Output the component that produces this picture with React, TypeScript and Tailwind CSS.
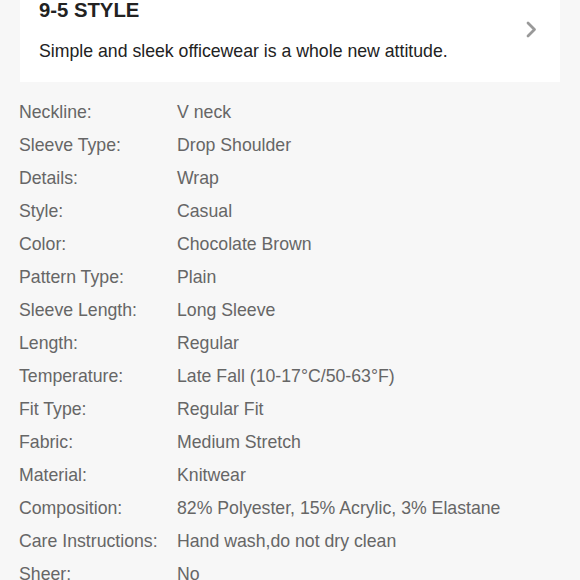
import React from "react";

const rows: [string, string][] = [
  ["Neckline:", "V neck"],
  ["Sleeve Type:", "Drop Shoulder"],
  ["Details:", "Wrap"],
  ["Style:", "Casual"],
  ["Color:", "Chocolate Brown"],
  ["Pattern Type:", "Plain"],
  ["Sleeve Length:", "Long Sleeve"],
  ["Length:", "Regular"],
  ["Temperature:", "Late Fall (10-17°C/50-63°F)"],
  ["Fit Type:", "Regular Fit"],
  ["Fabric:", "Medium Stretch"],
  ["Material:", "Knitwear"],
  ["Composition:", "82% Polyester, 15% Acrylic, 3% Elastane"],
  ["Care Instructions:", "Hand wash,do not dry clean"],
  ["Sheer:", "No"],
];

export default function App() {
  return (
    <div
      className="w-[580px] h-[580px] overflow-hidden bg-[#f7f7f7]"
      style={{ fontFamily: '"Liberation Sans", Arial, sans-serif' }}
    >
      <div className="ml-[20px] w-[540px] h-[82px] bg-white flex justify-between">
        <div className="pl-[19px]">
          <div className="text-[20.3px] leading-[20px] font-bold text-[#222]">9-5 STYLE</div>
          <div className="mt-[19px] text-[17.7px] leading-[24px] text-[#222]">
            Simple and sleek officewear is a whole new attitude.
          </div>
        </div>
        <svg
          className="mt-[21px] mr-[23px]"
          width="12"
          height="17"
          viewBox="0 0 12 17"
          fill="none"
        >
          <path d="M3 2 L9.5 8.5 L3 15" stroke="#999999" strokeWidth="2.8" strokeLinecap="round" strokeLinejoin="round" />
        </svg>
      </div>
      <div className="pt-[14px] pl-[19px]">
        {rows.map(([k, v]) => (
          <div key={k} className="flex h-[33px] leading-[33px] text-[17.7px] text-[#666666] whitespace-nowrap">
            <div className="w-[158px] shrink-0">{k}</div>
            <div>{v}</div>
          </div>
        ))}
      </div>
    </div>
  );
}
